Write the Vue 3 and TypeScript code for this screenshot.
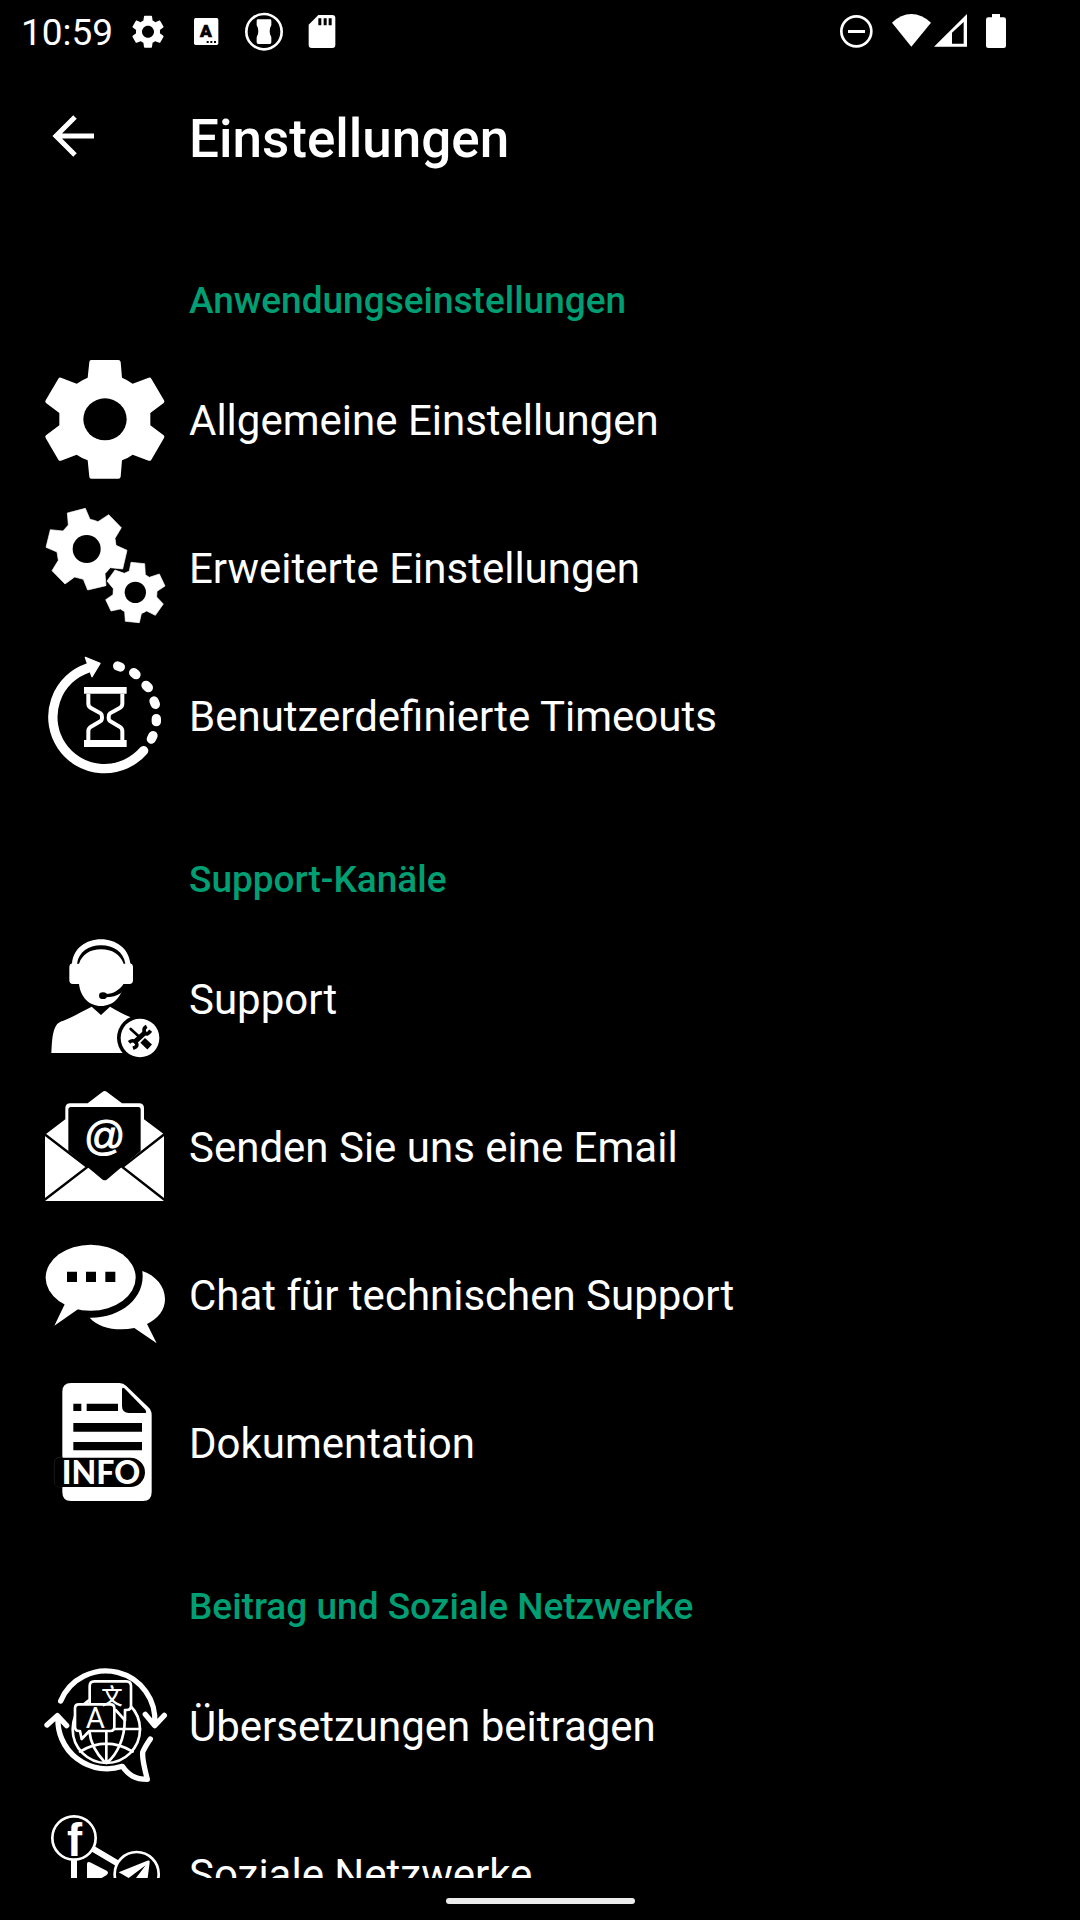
<script setup lang="ts">
type IconName =
  | 'gear' | 'gears' | 'timeout'
  | 'support' | 'mail' | 'chat' | 'docs'
  | 'translate' | 'social'

interface Item {
  icon: IconName
  label: string
  box: string
}

interface Section {
  id: string
  title: string
  items: Item[]
}

const sections: Section[] = [
  {
    id: 'app',
    title: 'Anwendungseinstellungen',
    items: [
      { icon: 'gear', label: 'Allgemeine Einstellungen', box: '45 57 360 360' },
      { icon: 'gears', label: 'Erweiterte Einstellungen', box: '45 51 360 360' },
      { icon: 'timeout', label: 'Benutzerdefinierte Timeouts', box: '45 45 360 360' },
    ],
  },
  {
    id: 'channels',
    title: 'Support-Kanäle',
    items: [
      { icon: 'support', label: 'Support', box: '45 39 360 360' },
      { icon: 'mail', label: 'Senden Sie uns eine Email', box: '45 33 360 360' },
      { icon: 'chat', label: 'Chat für technischen Support', box: '45 27 360 360' },
      { icon: 'docs', label: 'Dokumentation', box: '45 36 360 360' },
    ],
  },
  {
    id: 'community',
    title: 'Beitrag und Soziale Netzwerke',
    items: [
      { icon: 'translate', label: 'Übersetzungen beitragen', box: '45 30 360 360' },
      { icon: 'social', label: 'Soziale Netzwerke', box: '45 69 360 360' },
    ],
  },
]
</script>

<template>
  <div class="screen">
    <div class="status">
      <time class="clock">10:59</time>
      <div class="notifications">
        <svg viewBox="375 24 138 138" aria-hidden="true">
          <path transform="translate(444 95) scale(5) translate(-12 -12)" fill="#fff" d="M19.14 12.94c.04-.3.06-.61.06-.94 0-.32-.02-.64-.07-.94l2.03-1.58c.18-.14.23-.41.12-.61l-1.92-3.32c-.12-.22-.37-.29-.59-.22l-2.39.96c-.5-.38-1.03-.7-1.62-.94l-.36-2.54c-.04-.24-.24-.41-.48-.41h-3.84c-.24 0-.43.17-.47.41l-.36 2.54c-.59.24-1.13.57-1.62.94l-2.39-.96c-.22-.08-.47 0-.59.22L2.74 8.87c-.12.21-.08.47.12.61l2.03 1.58c-.05.3-.09.63-.09.94s.02.64.07.94l-2.03 1.58c-.18.14-.23.41-.12.61l1.92 3.32c.12.22.37.29.59.22l2.39-.96c.5.38 1.03.7 1.62.94l.36 2.54c.05.24.24.41.48.41h3.84c.24 0 .44-.17.47-.41l.36-2.54c.59-.24 1.13-.56 1.62-.94l2.39.96c.22.08.47 0 .59-.22l1.92-3.32c.12-.22.07-.47-.12-.61l-2.01-1.58zM12 15.6c-1.98 0-3.6-1.62-3.6-3.6s1.62-3.6 3.6-3.6 3.6 1.62 3.6 3.6-1.62 3.6-3.6 3.6z" />
        </svg>
        <svg viewBox="549 24 138 138" aria-hidden="true">
          <rect x="582" y="54" width="73" height="81" rx="5" fill="#fff" />
          <text class="badge-letter" x="618" y="112" text-anchor="middle">A</text>
          <path d="M620 123h6v6h-6zM631 123h6v6h-6zM642 123h6v6h-6z" />
        </svg>
        <svg viewBox="723 24 138 138" aria-hidden="true">
          <circle cx="792" cy="95" r="53" fill="none" stroke="#fff" stroke-width="8" />
          <path fill="#fff" d="M774 58H810Q814 58 814 62V76Q809 84 809 94T814 112V127Q814 132 809 132H775Q770 132 770 127V112Q775 104 775 94T770 76V62Q770 58 774 58Z" />
        </svg>
        <svg viewBox="897 24 138 138" aria-hidden="true">
          <path fill="#fff" d="M955 45H997Q1006 45 1006 54V135Q1006 144 997 144H935Q926 144 926 135V74Z" />
          <path d="M955 55h9v21h-9zM971 55h9v21h-9zM986 55h9v21h-9z" />
        </svg>
      </div>
      <div class="system">
        <svg class="dnd" viewBox="120 42 99 102" aria-hidden="true">
          <circle cx="169" cy="94" r="45" fill="none" stroke="#fff" stroke-width="8" />
          <path fill="#fff" d="M144 90h51v9h-51z" />
        </svg>
        <svg class="wifi" viewBox="276 42 117 102" aria-hidden="true">
          <path fill="#fff" d="M276 68Q303 42 334 42T393 68L334 140Z" />
        </svg>
        <svg class="signal" viewBox="402 42 99 102" aria-hidden="true">
          <path fill="#fff" fill-rule="evenodd" d="M402 140L501 42V140ZM456 98V131H491V66Z" />
        </svg>
        <svg class="battery" viewBox="558 42 60 102" aria-hidden="true">
          <path fill="#fff" d="M576 42H600V52H611Q618 52 618 59V137Q618 144 611 144H565Q558 144 558 137V59Q558 52 565 52H576Z" />
        </svg>
      </div>
    </div>

    <header class="toolbar">
      <button class="back" type="button" aria-label="Zurück">
        <svg viewBox="0 0 42 42" aria-hidden="true">
          <path d="M42 21H4M23 2L4 21L23 40" fill="none" stroke="#fff" stroke-width="5" />
        </svg>
      </button>
      <h1>Einstellungen</h1>
    </header>

    <main class="list">
      <section v-for="section in sections" :key="section.id">
        <h2>{{ section.title }}</h2>
        <a v-for="item in section.items" :key="item.icon" class="row" :href="'#' + item.icon">
          <svg class="icon" :viewBox="item.box" aria-hidden="true">
            <g v-if="item.icon === 'gear'">
              <path fill="#fff" d="M184 60H265Q271 60 272 66L276 113Q293 120 308 131L356 113Q361 111 364 116L402 181Q405 186 401 189L361 219V256L401 286Q405 289 402 294L364 359Q361 364 356 362L308 344Q293 355 276 361L272 410Q271 416 265 416H184Q178 416 178 410L173 361Q156 355 140 344L93 362Q88 364 85 359L47 294Q44 289 48 286L88 256V219L48 189Q44 186 47 181L85 116Q88 111 93 113L140 131Q156 120 173 113L178 66Q178 60 184 60Z" />
              <ellipse cx="225" cy="238" rx="65" ry="63" />
            </g>

            <g v-else-if="item.icon === 'gears'">
              <g fill="#fff" stroke="#fff" stroke-width="2" stroke-linejoin="round">
                <path d="M112 69L166 55L180 88Q192 90 204 95L236 74L274 113L255 145L258 166L291 181L278 237L241 233L225 251L228 287L173 300L160 268L134 261L105 282L66 242L85 211L81 186L48 172L61 119L99 123L115 105Z" />
                <path d="M303 217L344 221L346 254L358 262L388 252L405 288L381 304L380 321L400 342L376 376L350 363L334 371L328 398L286 394L284 365L271 357L243 363L227 329L249 314L250 296L231 273L255 240L283 250L298 243Z" />
              </g>
              <circle cx="170" cy="177" r="42" />
              <circle cx="316" cy="307" r="32" />
            </g>

            <g v-else-if="item.icon === 'timeout'" fill="none" stroke="#fff" stroke-linecap="round">
              <path stroke-width="28" d="M174 84A155 155 0 1 0 341 332" />
              <path fill="#fff" stroke-width="4" stroke-linejoin="round" d="M166 52L210 70L186 110Z" />
              <path stroke-width="28" d="M263 78L271 81M311 98L318 104M348 136L355 143M372 183L376 193M379 236V245M369 287L364 297" />
              <path fill="#fff" stroke="none" d="M162 141H290V161H162ZM162 300H290V321H162Z" />
              <path stroke-width="12" stroke-linecap="butt" d="M175 161V191Q175 199 183 204L212 220Q216 223 216 232T212 243L183 260Q175 265 175 273V300M277 161V191Q277 199 269 204L240 220Q236 223 236 232T240 243L269 260Q277 265 277 273V300" />
            </g>

            <g v-else-if="item.icon === 'support'">
              <path fill="#fff" d="M118 125Q118 117 126 115C130 70 168 43 213 43C258 43 296 70 301 115Q309 117 309 125V166Q309 177 298 177H281C276 215 250 243 213 243C177 243 151 215 147 177H129Q118 177 118 166Z" />
              <path d="M141 116C147 80 175 61 213 61C251 61 280 80 286 116H281C270 88 247 73 213 73C180 73 157 88 147 116Z" />
              <path d="M225 207C250 208 266 196 281 177H290L273 204C262 212 245 217 225 217Z" />
              <ellipse cx="219" cy="212" rx="12" ry="10" />
              <path fill="#fff" d="M64 384C66 345 67 322 78 302C82 294 90 290 100 287C130 276 158 258 185 245L213 270L240 245C262 258 280 268 302 277V384Z" />
              <circle cx="330" cy="339" r="69" />
              <circle cx="330" cy="339" r="58" fill="#fff" />
              <g fill="none" stroke="#000">
                <path stroke-width="8" stroke-linecap="round" d="M302 312L326 334" />
                <path stroke-width="20" d="M338 346L359 366" />
                <path stroke-width="15" d="M312 353L347 321" />
                <path stroke-width="11" d="M297 352Q309 342 318 353T309 370M350 304Q338 310 344 322T362 317" />
              </g>
            </g>

            <g v-else-if="item.icon === 'mail'">
              <path fill="#fff" d="M45 179L106 133V100Q106 85 121 85H173L218 50Q224 46 230 50L276 85H327Q342 85 342 100V133L402 178V378H45Z" />
              <path d="M115 104Q115 96 123 96H325Q332 96 332 104V228L230 314Q224 318 218 314L115 228Z" />
              <path fill="none" stroke="#000" stroke-width="7" d="M43 177L172 276L43 375M404 177L277 276L404 375" />
              <text class="at" x="224" y="226" text-anchor="middle">@</text>
            </g>

            <g v-else-if="item.icon === 'chat'">
              <ellipse cx="182" cy="158" rx="135" ry="99" fill="#fff" />
              <path fill="#fff" d="M106 234L73 302L148 250Z" />
              <path d="M111 140h30v31h-30zM168 140h30v31h-30zM226 140h30v31h-30z" />
              <path fill="#fff" d="M337 138C378 152 405 185 405 222C405 255 385 280 351 297L380 355L313 309C260 320 205 308 179 278C270 280 348 220 337 138Z" />
            </g>

            <g v-else-if="item.icon === 'docs'">
              <path fill="#fff" d="M97 65Q97 39 123 39H268Q280 39 289 48L355 112Q365 121 365 135V367Q365 393 339 393H123Q97 393 97 367Z" />
              <path d="M276 58Q276 50 283 55L346 119Q352 129 344 129H297Q276 129 276 108Z" />
              <path d="M130 101h24v22h-24zM170 101h94v22h-94zM130 159h206v26H130zM130 216h206v25H130z" />
              <path stroke="#333" stroke-width="2" d="M98 262H92Q73 262 73 281V332Q73 351 92 351H98" />
              <path d="M92 263H301A44 44 0 0 1 301 351H92Q74 351 74 332V281Q74 263 92 263Z" />
              <text class="info" x="213" y="341" text-anchor="middle">INFO</text>
            </g>

            <g v-else-if="item.icon === 'translate'" fill="none" stroke="#fff" stroke-linecap="round" stroke-linejoin="round">
              <g stroke-width="16">
                <path d="M92 138A147 147 0 0 1 374 208M346 178L374 212L403 181" />
                <path d="M84 186A147 147 0 0 0 277 334C295 360 315 373 352 373C345 345 336 315 338 292Q345 275 361 252M51 210L82 182L110 212" />
              </g>
              <g stroke-width="8">
                <circle cx="229" cy="223" r="101" />
                <path d="M229 228V324M250 222H330M150 290Q229 242 308 290M178 228C182 270 203 300 225 322M284 195C285 250 260 300 232 322" />
                <path fill="#000" d="M193 79H289Q303 79 303 93V152Q303 165 290 165H285V196L257 165H193Q179 165 179 152V93Q179 79 193 79Z" />
                <path fill="#000" d="M147 148H241Q253 148 253 160V215Q253 228 241 228H178L155 252L150 228H147Q135 228 135 215V160Q135 148 147 148Z" />
              </g>
              <text class="bubble-latin" x="196" y="220" text-anchor="middle">A</text>
              <text class="bubble-han" x="246" y="147" text-anchor="middle">文</text>
            </g>

            <g v-else>
              <path fill="none" stroke="#fff" stroke-width="18" d="M188 176L264 221M132 210V340" />
              <g stroke="#fff" stroke-width="8">
                <circle cx="132" cy="144" r="65" />
                <circle cx="320" cy="252" r="66" />
              </g>
              <text class="network-letter" x="134" y="197" text-anchor="middle">f</text>
              <path fill="#fff" d="M171 222Q171 213 180 217L230 242Q238 248 230 255L171 290Z" />
              <path fill="#fff" d="M266 247L352 212Q360 209 359 217L351 280L318 264L347 226L296 264Z" />
            </g>
          </svg>
          <span class="label">{{ item.label }}</span>
        </a>
      </section>
    </main>

    <footer class="navigation"><span class="pill"></span></footer>
  </div>
</template>

<style>
body {
  background: #000;
}
</style>

<style scoped>
.screen {
  box-sizing: border-box;
  display: flex;
  flex-direction: column;
  height: 100vh;
  background: #000;
  color: #fff;
  font-family: Roboto, "Noto Sans", sans-serif;
}

svg {
  display: block;
  flex: none;
  overflow: visible;
}

.status {
  display: flex;
  align-items: center;
  flex: none;
  height: 62px;
  padding: 0 74px 0 21px;
}

.clock {
  width: 104px;
  font-size: 37px;
  line-height: 44px;
  padding-top: 4px;
}

.notifications {
  display: flex;
  gap: 12px;
}

.notifications svg {
  width: 46px;
  height: 46px;
}

.system {
  display: flex;
  margin-left: auto;
}

.system svg {
  height: 34px;
}

.dnd {
  width: 33px;
  margin-right: 19px;
}

.wifi {
  width: 39px;
  margin-right: 3px;
}

.signal {
  width: 33px;
  margin-right: 19px;
}

.battery {
  width: 20px;
}

.toolbar {
  display: flex;
  align-items: center;
  flex: none;
  height: 148px;
}

.back {
  width: 189px;
  height: 148px;
  padding: 0 0 0 52px;
  border: 0;
  background: none;
}

.back svg {
  width: 42px;
  height: 42px;
}

h1 {
  margin: 0;
  padding-top: 6px;
  font-size: 53px;
  line-height: 62px;
  font-weight: 500;
}

.list {
  flex: 1;
  min-height: 0;
  overflow-y: auto;
  scrollbar-width: none;
}

h2 {
  margin: 0;
  padding: 69px 24px 22px 189px;
  color: #009e73;
  font-size: 37px;
  line-height: 44px;
  font-weight: 500;
}

.row {
  display: flex;
  align-items: center;
  gap: 24px;
  height: 148px;
  padding: 0 24px 0 45px;
  color: inherit;
  text-decoration: none;
}

.icon {
  width: 120px;
  height: 120px;
}

.label {
  padding-top: 4px;
  font-size: 42px;
  line-height: 50px;
}

.navigation {
  display: flex;
  justify-content: center;
  flex: none;
  height: 22px;
  padding-top: 20px;
}

.pill {
  width: 189px;
  height: 6px;
  border-radius: 3px;
  background: #ececec;
}

.badge-letter {
  font-size: 52px;
  font-weight: 900;
  fill: #000;
  stroke: #000;
  stroke-width: 2px;
}

.at {
  font-family: "Liberation Sans", sans-serif;
  font-size: 122px;
  fill: #fff;
  stroke: #fff;
  stroke-width: 3px;
}

.info {
  font-family: Lato, sans-serif;
  font-size: 96px;
  font-weight: 900;
  fill: #fff;
}

.bubble-latin {
  font-size: 88px;
  font-weight: 400;
  fill: #fff;
  stroke: none;
}

.bubble-han {
  font-family: "Noto Sans CJK SC", sans-serif;
  font-size: 64px;
  font-weight: 500;
  fill: #fff;
  stroke: none;
}

.network-letter {
  font-family: "Liberation Sans", sans-serif;
  font-size: 136px;
  font-weight: 700;
  fill: #fff;
}
</style>
